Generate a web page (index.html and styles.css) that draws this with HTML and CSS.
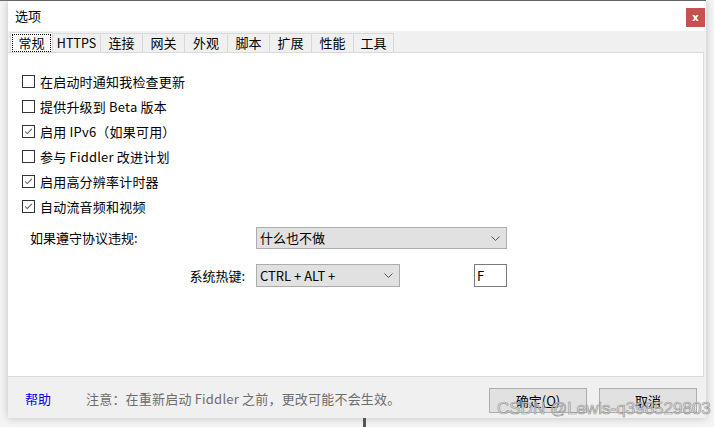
FILE: index.html
```html
<!DOCTYPE html>
<html lang="zh-CN">
<head>
    <meta charset="UTF-8">
    <title>选项</title>
    <link rel="stylesheet" href="styles.css">
</head>
<body>
    <div class="top-line"></div>
    <div class="dialog">
        <div class="titlebar">
            <span class="title">选项</span>
            <button class="close">x</button>
        </div>
        <div class="tabs">
            <div class="tab active"><span class="focus">常规</span></div>
            <div class="tab">HTTPS</div>
            <div class="tab">连接</div>
            <div class="tab">网关</div>
            <div class="tab">外观</div>
            <div class="tab">脚本</div>
            <div class="tab">扩展</div>
            <div class="tab">性能</div>
            <div class="tab">工具</div>
        </div>
        <div class="panel">
            <div class="checks">
                <label class="check"><span class="box"></span>在启动时通知我检查更新</label>
                <label class="check"><span class="box"></span>提供升级到 Beta 版本</label>
                <label class="check"><span class="box checked"><svg viewBox="0 0 13 13"><path d="M2.5 6.5 L5 9 L10.5 3.5" /></svg></span>启用 IPv6（如果可用）</label>
                <label class="check"><span class="box"></span>参与 Fiddler 改进计划</label>
                <label class="check"><span class="box checked"><svg viewBox="0 0 13 13"><path d="M2.5 6.5 L5 9 L10.5 3.5" /></svg></span>启用高分辨率计时器</label>
                <label class="check"><span class="box checked"><svg viewBox="0 0 13 13"><path d="M2.5 6.5 L5 9 L10.5 3.5" /></svg></span>自动流音频和视频</label>
            </div>
            <div class="fields">
                <span class="field-label">如果遵守协议违规:</span>
                <div class="select wide">
                    <span>什么也不做</span>
                    <svg class="chevron" viewBox="0 0 9 5"><path d="M0.5 0.5 L4.5 4.5 L8.5 0.5" /></svg>
                </div>
                <span class="field-label right">系统热键:</span>
                <div class="hotkey">
                    <div class="select short">
                        <span>CTRL + ALT +</span>
                        <svg class="chevron" viewBox="0 0 9 5"><path d="M0.5 0.5 L4.5 4.5 L8.5 0.5" /></svg>
                    </div>
                    <div class="key-input">F</div>
                </div>
            </div>
        </div>
        <div class="footer">
            <a class="help">帮助</a>
            <span class="note">注意：在重新启动 Fiddler 之前，更改可能不会生效。</span>
            <div class="buttons">
                <button class="btn">确定(<u>O</u>)</button>
                <button class="btn">取消</button>
            </div>
        </div>
    </div>
    <div class="stem"></div>
    <div class="watermark">CSDN @Lewis-q398529803</div>
</body>
</html>
```

FILE: styles.css
```css
body {
    margin: 0;
    width: 714px;
    height: 427px;
    background: #f4f4f4;
    font-family: "Noto Sans CJK SC", "Microsoft YaHei", sans-serif;
    font-size: 13px;
    color: #000;
    position: relative;
    overflow: hidden;
}

.top-line {
    height: 1px;
    width: 706px;
    background: #6e6e6e;
}

.dialog {
    margin-left: 8px;
    width: 698px;
    height: 417px;
    background: #f0f0f0;
    box-shadow: 0 0 8px rgba(0, 0, 0, 0.22);
    display: flex;
    flex-direction: column;
}

.titlebar {
    height: 30px;
    background: #fff;
    display: flex;
    align-items: flex-start;
    justify-content: space-between;
}

.title {
    margin: 5px 0 0 7px;
    font-size: 13px;
    line-height: 20px;
}

.close {
    margin: 7px 1px 0 0;
    width: 19px;
    height: 19px;
    border: none;
    padding: 0;
    background: #c75050;
    color: #fff;
    font-family: "DejaVu Sans", sans-serif;
    font-weight: bold;
    font-size: 10px;
    line-height: 17px;
}

.tabs {
    height: 21px;
    display: flex;
    align-items: flex-end;
    padding-left: 2px;
}

.tab {
    box-sizing: border-box;
    height: 19px;
    padding: 0;
    border: 1px solid #d9d9d9;
    border-bottom: none;
    margin-left: -1px;
    background: #f0f0f0;
    font-size: 13px;
    line-height: 18px;
    text-align: center;
}

.tab:nth-child(2) { width: 49px; font-size: 12.5px; }
.tab:nth-child(3) { width: 43px; }
.tab:nth-child(4) { width: 43px; }
.tab:nth-child(5) { width: 44px; }
.tab:nth-child(6) { width: 43px; }
.tab:nth-child(7) { width: 43px; }
.tab:nth-child(8) { width: 43px; }
.tab:nth-child(9) { width: 41px; }

.tab.active {
    background: #fff;
    padding: 0 1px;
    width: 43px;
    height: 20px;
    margin-left: 0;
    position: relative;
    z-index: 1;
}

.focus {
    display: block;
    border: 1px dotted #000;
    height: 16px;
    line-height: 16px;
    margin-top: 1px;
}

.panel {
    height: 323px;
    margin-right: 2px;
    background: #fff;
    border: 1px solid #d9d9d9;
    border-left: none;
}

.checks {
    padding: 22px 0 0 14px;
    display: flex;
    flex-direction: column;
    gap: 12px;
}

.check {
    display: flex;
    align-items: center;
    height: 13px;
    letter-spacing: 0.2px;
    line-height: 13px;
}

.box {
    width: 11px;
    height: 11px;
    border: 1px solid #333;
    background: #fff;
    margin-right: 5px;
    flex: none;
}

.box svg {
    display: block;
    width: 11px;
    height: 11px;
}

.box path {
    fill: none;
    stroke: #555;
    stroke-width: 1.2;
}

.fields {
    margin-top: 14px;
    padding-left: 22px;
    display: grid;
    grid-template-columns: 215px 251px;
    column-gap: 11px;
    row-gap: 15px;
    align-items: center;
}

.field-label {
    line-height: 20px;
}

.field-label.right {
    justify-self: end;
}

.select {
    height: 20px;
    background: #e1e1e1;
    border: 1px solid #adadad;
    display: flex;
    align-items: center;
    justify-content: space-between;
    padding: 0 6px 0 3px;
    line-height: 20px;
}

.select.short {
    width: 133px;
    height: 21px;
}

.chevron {
    width: 9px;
    height: 5px;
}

.chevron path {
    fill: none;
    stroke: #555;
    stroke-width: 1;
}

.hotkey {
    display: flex;
    justify-content: space-between;
    align-items: center;
}

.key-input {
    width: 29px;
    height: 21px;
    border: 1px solid #7a7a7a;
    background: #fff;
    padding-left: 2px;
    line-height: 21px;
}

.footer {
    flex: 1;
    display: flex;
    align-items: flex-start;
    padding: 11px 9px 0 17px;
}

.help {
    color: #0000ff;
    width: 61px;
    line-height: 22px;
}

.note {
    color: #6d6d6d;
    letter-spacing: 0.2px;
    flex: 1;
    line-height: 22px;
}

.buttons {
    display: flex;
    gap: 12px;
}

.btn {
    width: 98px;
    height: 25px;
    background: #e1e1e1;
    border: 1px solid #adadad;
    font-family: "Noto Sans CJK SC", sans-serif;
    font-size: 13px;
    color: #000;
    padding: 0;
    line-height: 21px;
}

.stem {
    position: absolute;
    left: 363px;
    top: 418px;
    width: 3px;
    height: 9px;
    background: #555;
}

.watermark {
    position: absolute;
    left: 497px;
    top: 399px;
    font-family: "Liberation Sans", Arial, sans-serif;
    font-size: 17px;
    color: rgba(240, 240, 240, 0.6);
    -webkit-text-stroke: 0.7px #999;
    white-space: nowrap;
}
```
